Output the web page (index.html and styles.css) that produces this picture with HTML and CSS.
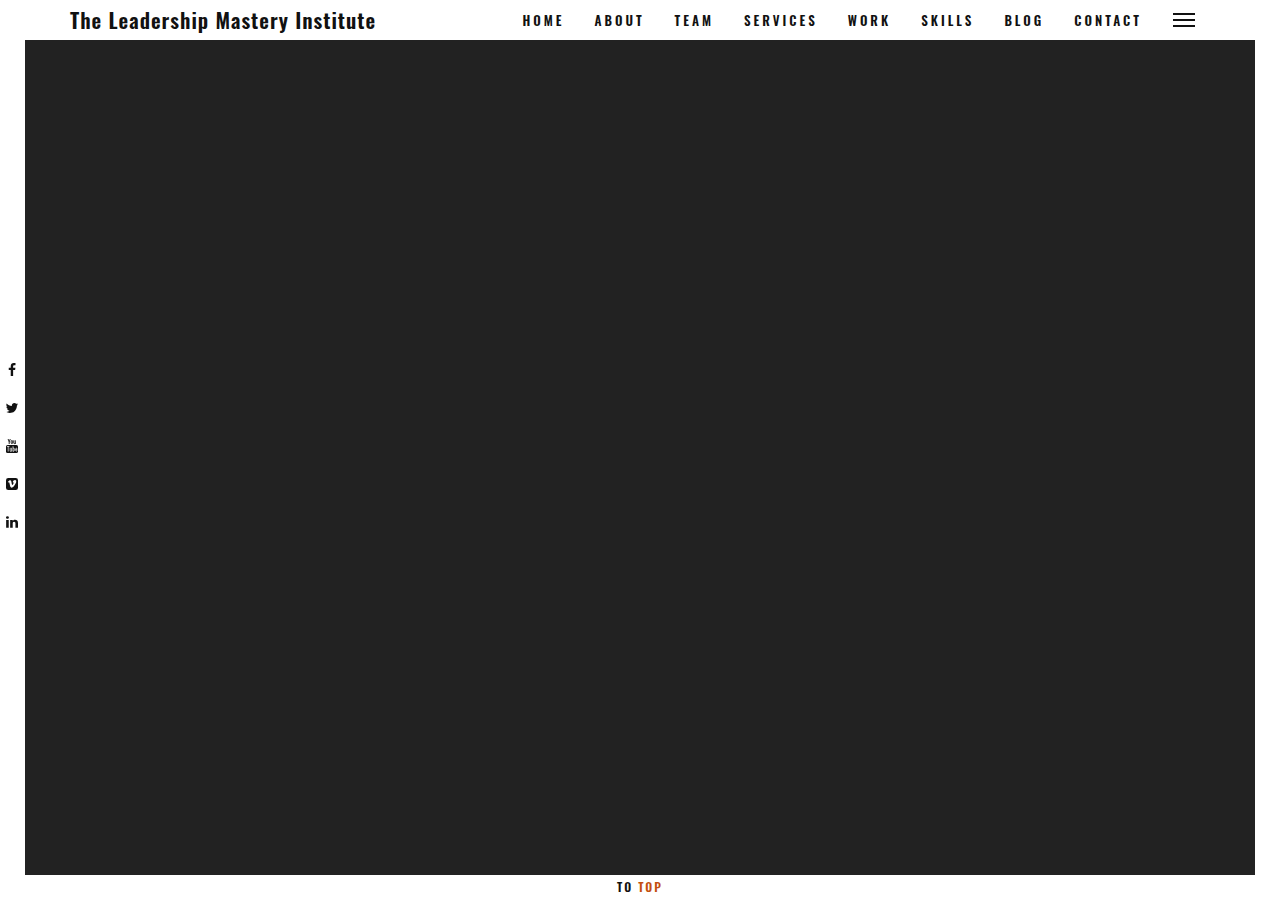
FILE: index.html
```html
<!DOCTYPE html>
<html lang="en">
<head>
<meta charset="utf-8">
<meta name="viewport" content="width=device-width, initial-scale=1">
<title>The Leadership Mastery Institute</title>
<link rel="stylesheet" href="styles.css">
</head>
<body class="page">
<header class="header">
  <a class="brand" href="#home">The Leadership Mastery Institute</a>
  <nav class="nav" aria-label="Main">
    <a href="#home">HOME</a>
    <a href="#about">ABOUT</a>
    <a href="#team">TEAM</a>
    <a href="#services">SERVICES</a>
    <a href="#work">WORK</a>
    <a href="#skills">SKILLS</a>
    <a href="#blog">BLOG</a>
    <a href="#contact">CONTACT</a>
  </nav>
  <button class="menu" type="button" aria-label="Open menu">
    <span class="menu-line"></span><span class="menu-line"></span><span class="menu-line"></span>
  </button>
</header>
<aside class="social" aria-label="Social links">
  <a href="#facebook" aria-label="Facebook"><svg viewBox="0 0 1792 1792"><path d="M1343 12v264h-157q-86 0-116 36t-30 108v189h293l-39 296h-254v759h-306v-759h-255v-296h255v-218q0-186 104-288.5t277-102.5q147 0 228 12z"/></svg></a>
  <a href="#twitter" aria-label="Twitter"><svg viewBox="0 0 1792 1792"><path d="M1684 408q-67 98-162 167 1 14 1 42 0 130-38 259.5t-115.5 248.5-184.5 210.5-258 146-323 54.5q-271 0-496-145 35 4 78 4 225 0 401-138-105-2-188-64.5t-114-159.5q33 5 61 5 43 0 85-11-112-23-185.5-111.5t-73.5-205.5v-4q68 38 146 41-66-44-105-115t-39-154q0-88 44-163 121 149 294.5 238.5t371.5 99.5q-8-38-8-74 0-134 94.5-228.5t228.5-94.5q140 0 236 102 109-21 205-78-37 115-142 178 93-10 186-50z"/></svg></a>
  <a href="#youtube" aria-label="YouTube"><svg viewBox="0 0 14 14"><path d="M3.1 0l1.1 2.9V5M5.3 0L4.2 2.9M6.2 2.2q0-.7.7-.7t.7.7v1.7q0 .7-.7.7t-.7-.7zM8.8 1.3v2.8q0 .5.5.5t1-.5M10.3 1.3V5" fill="none" stroke="currentColor" stroke-width=".9"/><rect x="1" y="6" width="12" height="8" rx="1.6"/><path d="M2 7.5h2.4M3.2 7.5v5M5.2 8.8v3q0 .6.5.6t.9-.6M6.6 8.8v3.7M8 7.2v5.3M8 9.2q1.3-.5 1.3.5v1.8q0 1-1.3.6M12 11.3q0 .9-.6.9t-.7-.9v-1.2q0-.9.7-.9t.6.9v.6h-1.3" fill="none" stroke="#fff" stroke-width=".7"/></svg></a>
  <a href="#vimeo" aria-label="Vimeo"><svg viewBox="0 0 14 14"><rect x="1" y="1" width="12" height="12" rx="2.3"/><path d="M2.8 4.9c1-.9 1.7-1.6 2.3-1.6.9-.1 1.2.7 1.4 1.9.3 1.8.5 2.7.8 2.7.4 0 1.3-1.4 1.3-2 .1-.7-.3-.8-.9-.6.4-1.4 1.2-2.2 2.3-2.2 1 0 1.4.7 1.2 1.8-.3 1.6-2.9 5.8-4.5 5.8-1.5 0-1.6-2-2.1-3.9-.2-1-.4-1.7-.8-1.6l-.6.4z" fill="#fff"/></svg></a>
  <a href="#linkedin" aria-label="LinkedIn"><svg viewBox="0 0 1792 1792"><path d="M477 625v991h-330v-991h330zm21-306q1 73-50.5 122t-135.5 49h-2q-82 0-132-49t-50-122q0-74 51.5-122.5t134.5-48.5 133 48.5 51 122.5zm1166 729v568h-329v-530q0-105-40.5-164.5t-126.5-59.5q-63 0-105.5 34.5t-63.5 85.5q-11 30-11 81v553h-329q2-399 2-647t-1-296l-1-48h329v144h-2q20-32 41-56t56.5-52 87-43.5 114.5-15.5q171 0 275 113.5t104 332.5z"/></svg></a>
</aside>
<main class="stage" id="home"></main>
<footer class="footer"><a href="#home">TO <span class="accent">TOP</span></a></footer>
</body>
</html>
```
FILE: styles.css
```css
* { box-sizing: border-box; }

.page {
  display: grid;
  grid-template: 40px 1fr 25px / 25px 1fr 25px;
  min-height: 100vh;
  margin: 0;
  background: #fff;
  color: #111;
  font-family: Oswald, "Liberation Sans Narrow", "Liberation Sans", sans-serif;
  font-weight: 600;
}

a { color: inherit; text-decoration: none; }

.header {
  grid-column: 1 / -1;
  display: flex;
  align-items: center;
  padding: 0 85px 0 70px;
}

.brand {
  font-size: 21px;
  line-height: 40px;
  letter-spacing: 1px;
  white-space: nowrap;
}

.nav {
  display: flex;
  gap: 30px;
  margin-left: auto;
  font-size: 13px;
  line-height: 38px;
  letter-spacing: 3px;
}

.menu {
  display: flex;
  flex-direction: column;
  gap: 4px;
  width: 22px;
  margin-left: 31px;
  padding: 0;
  border: 0;
  background: none;
  cursor: pointer;
}

.menu-line { height: 2px; background: #111; }

.social {
  display: flex;
  flex-direction: column;
  justify-content: center;
  padding: 0 2px 23px 0;
}

.social a {
  display: flex;
  align-items: center;
  justify-content: center;
  height: 38px;
}

.social svg { width: 14px; height: 14px; fill: currentColor; }

.stage { background: #222; }

.footer {
  grid-column: 1 / -1;
  text-align: center;
  font-size: 12px;
  line-height: 24px;
  letter-spacing: 2px;
}

.accent { color: #c4500f; }
```
